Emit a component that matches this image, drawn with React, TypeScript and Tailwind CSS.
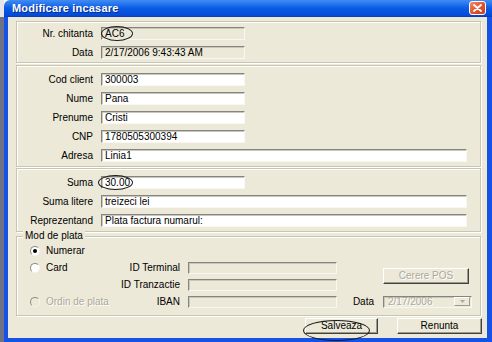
import React from 'react';

const sunken = 'border-t border-l border-[#858580] border-r border-b border-r-[#f8f7f2] border-b-[#f8f7f2] shadow-[inset_1px_1px_0_#c9c7bb]';
const groupBox = 'relative border border-[#c8c5b3] shadow-[inset_1px_1px_0_#ffffff,1px_1px_0_#ffffff]';
const disabledText = 'text-[#aca899] [text-shadow:1px_1px_0_#ffffff]';

interface FieldProps {
  value?: string;
  long?: boolean;
  readOnly?: boolean;
}

const Field = ({ value = '', long, readOnly }: FieldProps) => (
  <div
    className={`h-[13px] ${long ? 'w-[366px]' : 'w-[144px]'} ${readOnly ? 'bg-[#ece9d8]' : 'bg-white'} ${sunken} flex items-center pl-[3px] text-[10px] leading-none text-black whitespace-nowrap overflow-hidden`}
  >
    {value}
  </div>
);

interface RowProps {
  label: string;
  children: React.ReactNode;
}

const Row = ({ label, children }: RowProps) => (
  <div className="flex items-center h-[13px]">
    <div className="w-[76px] text-right text-[10px] leading-none">{label}</div>
    <div className="ml-[8px]">{children}</div>
  </div>
);

const Radio = ({ checked, disabled }: { checked?: boolean; disabled?: boolean }) => (
  <div
    className={`w-[10px] h-[10px] rounded-full border border-t-[#8a8a85] border-l-[#8a8a85] border-r-[#f4f3ee] border-b-[#f4f3ee] ${disabled ? 'bg-[#ece9d8]' : 'bg-white'} flex items-center justify-center`}
  >
    {checked && <div className="w-[4px] h-[4px] rounded-full bg-black" />}
  </div>
);

const Ellipse = ({ className }: { className: string }) => (
  <div className={`absolute rounded-[50%] border border-[#1a1a1a] pointer-events-none ${className}`} />
);

const Button = ({ label, disabled, children }: { label: string; disabled?: boolean; children?: React.ReactNode }) => (
  <div
    className={`relative h-[16px] flex items-center justify-center text-[10px] leading-none bg-[#ece9d8] border border-t-white border-l-white border-r-[#404040] border-b-[#404040] shadow-[inset_-1px_-1px_0_#9d9b8f] ${disabled ? disabledText : 'text-black'}`}
  >
    {label}
    {children}
  </div>
);

export default function App() {
  return (
    <div className="w-[492px] h-[342px] flex overflow-hidden font-['Liberation_Sans',Arial,sans-serif] text-black">
      {/* desktop behind */}
      <div className="w-[4px] flex flex-col">
        <div className="h-[17px] bg-[#e6e6ea]" />
        <div className="flex-1 bg-[#6e7283]" />
      </div>

      {/* window */}
      <div className="flex-1 flex flex-col">
        {/* title bar */}
        <div className="h-[17px] rounded-tl-[6px] bg-gradient-to-b from-[#3f8cf3] via-[#0a5ce6] to-[#0549d4] flex items-center pl-[8px] pr-[6px] border-b border-[#0a3fc0]">
          <span className="text-white font-bold text-[11px] leading-none tracking-[0.2px] [text-shadow:1px_1px_0_#0a2a8a]">
            Modificare incasare
          </span>
          <div className="ml-auto w-[17px] h-[14px] rounded-[3px] border border-white bg-gradient-to-br from-[#f08a6a] via-[#e2552f] to-[#c7401c] flex items-center justify-center">
            <svg width="9" height="8" viewBox="0 0 9 8">
              <path d="M1 1 L8 7 M8 1 L1 7" stroke="#ffffff" strokeWidth="1.8" strokeLinecap="round" />
            </svg>
          </div>
        </div>

        <div className="flex-1 flex border-l-4 border-r-[5px] border-b-4 border-[#1553e6]">
          <div className="flex-1 bg-[#ece9d8] pl-[8px] pr-[6px] pt-[4px] flex flex-col">
            {/* group 1 */}
            <div className={`${groupBox} h-[42px] pt-[5px] flex flex-col gap-[6px]`}>
              <Row label="Nr. chitanta">
                <Field value="AC6" readOnly />
              </Row>
              <Row label="Data">
                <Field value="2/17/2006 9:43:43 AM" readOnly />
              </Row>
              <Ellipse className="left-[84px] top-[4px] w-[32px] h-[15px]" />
            </div>

            {/* group 2 */}
            <div className={`${groupBox} mt-[2px] h-[102px] pt-[7px] flex flex-col gap-[6px]`}>
              <Row label="Cod client">
                <Field value="300003" />
              </Row>
              <Row label="Nume">
                <Field value="Pana" />
              </Row>
              <Row label="Prenume">
                <Field value="Cristi" />
              </Row>
              <Row label="CNP">
                <Field value="1780505300394" />
              </Row>
              <Row label="Adresa">
                <Field value="Linia1" long />
              </Row>
            </div>

            {/* group 3 */}
            <div className={`${groupBox} mt-[1px] h-[64px] pt-[7px] flex flex-col gap-[6px]`}>
              <Row label="Suma">
                <Field value="30.00" />
              </Row>
              <Row label="Suma litere">
                <Field value="treizeci lei" long />
              </Row>
              <Row label="Reprezentand">
                <Field value="Plata factura numarul:" long />
              </Row>
              <Ellipse className="left-[81px] top-[6px] w-[35px] h-[15px]" />
            </div>

            {/* mod de plata */}
            <div className={`${groupBox} mt-[4px] h-[80px] pt-[5px] pl-[13px]`}>
              <span className="absolute -top-[6px] left-[6px] px-[2px] bg-[#ece9d8] text-[10px] leading-none">
                Mod de plata
              </span>
              <div className="grid grid-cols-[90px_68px_149px_46px_89px] grid-rows-[17px_17px_17px_17px] text-[10px] leading-none">
                <div className="flex items-center gap-[6px]">
                  <Radio checked />
                  <span>Numerar</span>
                </div>
                <div className="col-span-4" />

                <div className="flex items-center gap-[6px]">
                  <Radio />
                  <span>Card</span>
                </div>
                <div className="flex items-center justify-end pr-[8px]">ID Terminal</div>
                <div className="flex items-center">
                  <div className={`h-[12px] w-[149px] bg-[#ece9d8] ${sunken}`} />
                </div>
                <div />
                <div className="row-span-2 flex items-center">
                  <div className="w-[86px]">
                    <Button label="Cerere POS" disabled />
                  </div>
                </div>

                <div />
                <div className="flex items-center justify-end pr-[8px]">ID Tranzactie</div>
                <div className="flex items-center">
                  <div className={`h-[12px] w-[149px] bg-[#ece9d8] ${sunken}`} />
                </div>
                <div />

                <div className="flex items-center gap-[6px]">
                  <Radio disabled />
                  <span className={disabledText}>Ordin de plata</span>
                </div>
                <div className="flex items-center justify-end pr-[8px]">IBAN</div>
                <div className="flex items-center">
                  <div className={`h-[12px] w-[149px] bg-[#ece9d8] ${sunken}`} />
                </div>
                <div className="flex items-center justify-end pr-[9px]">Data</div>
                <div className="flex items-center">
                  <div className={`h-[12px] w-[89px] bg-[#ece9d8] ${sunken} flex items-center pl-[4px]`}>
                    <span className={disabledText}>2/17/2006</span>
                    <div className="ml-auto mr-[1px] w-[16px] h-[9px] bg-[#ece9d8] border border-t-white border-l-white border-r-[#9d9b8f] border-b-[#9d9b8f] flex items-center justify-center">
                      <svg width="5" height="3" viewBox="0 0 5 3">
                        <path d="M0 0 H5 L2.5 3 Z" fill="#aca899" />
                      </svg>
                    </div>
                  </div>
                </div>
              </div>
            </div>

            {/* buttons */}
            <div className="mt-[2px] flex justify-end gap-[19px] -mr-[1px]">
              <div className="relative w-[73px]">
                <Button label="Salveaza" />
                <Ellipse className="-left-[2px] top-[2px] w-[67px] h-[21px] z-10" />
              </div>
              <div className="w-[85px]">
                <Button label="Renunta" />
              </div>
            </div>
          </div>
        </div>
      </div>
    </div>
  );
}
